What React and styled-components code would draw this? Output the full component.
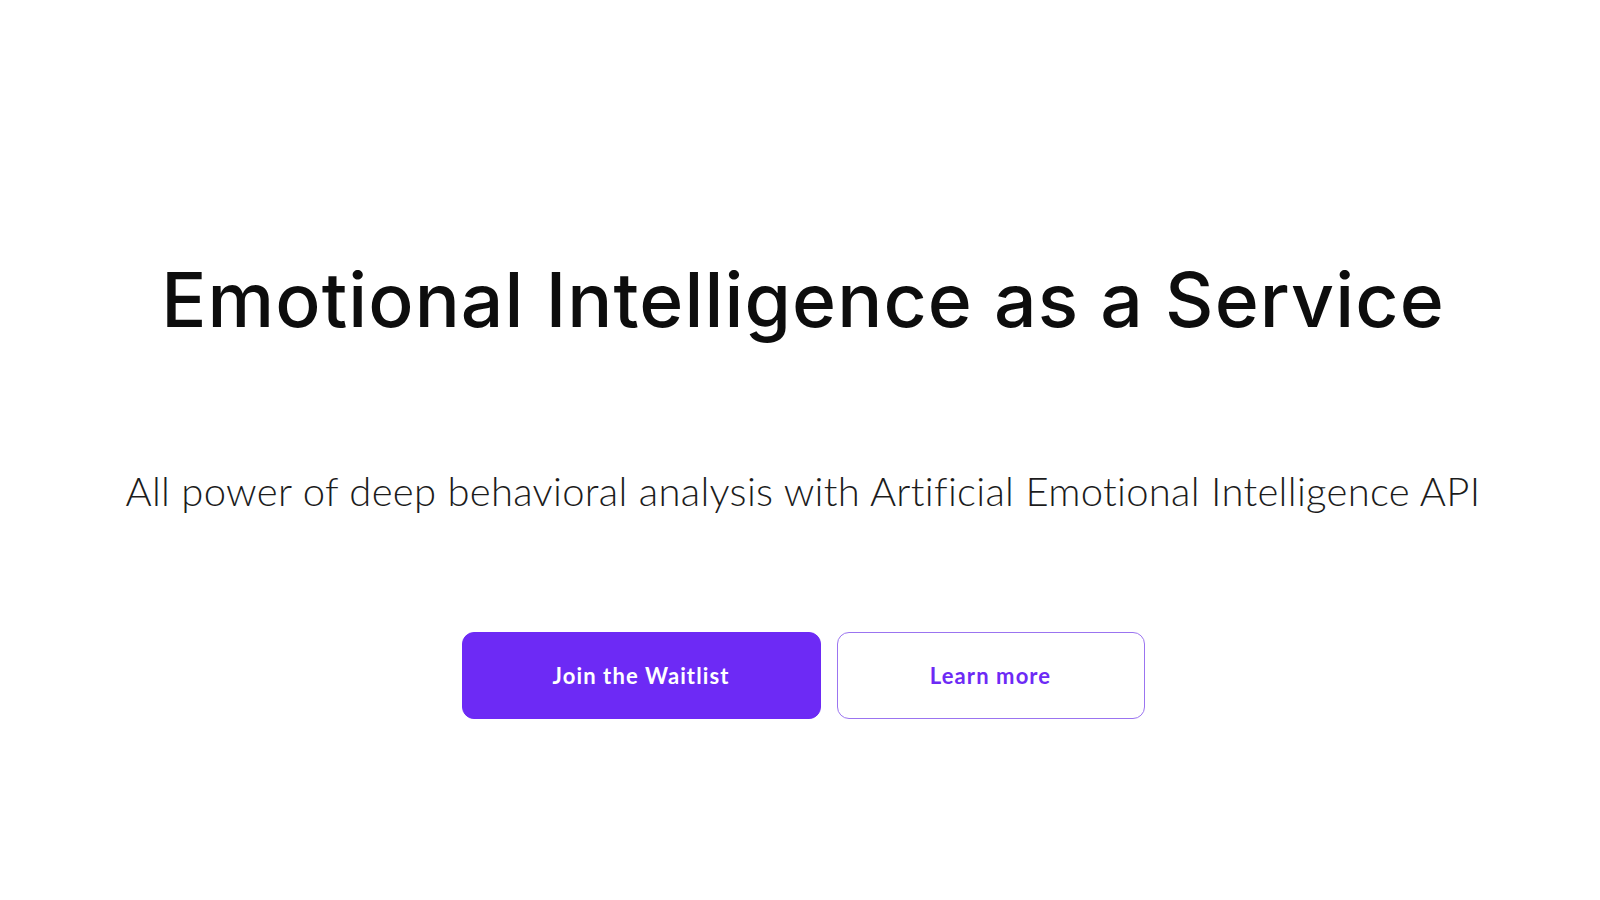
import React from 'react';
import styled, { createGlobalStyle } from 'styled-components';

const GlobalStyle = createGlobalStyle`
  html, body {
    margin: 0;
    padding: 0;
    background: #fff;
  }
  body {
    font-family: Inter, Lato, 'Noto Sans', sans-serif;
    color: #111;
  }
`;

const Hero = styled.section`
  width: 100%;
  min-height: 900px;
  padding: 262px 0 0 6px;
  box-sizing: border-box;
  display: flex;
  flex-direction: column;
  align-items: center;
  text-align: center;
`;

const Title = styled.h1`
  margin: 0;
  font-family: Inter, Lato, sans-serif;
  font-size: 75px;
  line-height: 1;
  font-weight: 500;
  letter-spacing: 1.1px;
  color: #0d0d0d;
  font-variant-ligatures: none;
`;

const Subtitle = styled.p`
  margin: 134px 0 0;
  font-family: Lato, 'Noto Sans', sans-serif;
  font-size: 40px;
  line-height: 1;
  font-weight: 300;
  letter-spacing: 0.3px;
  color: #1c1c1c;
  font-variant-ligatures: none;
`;

const Actions = styled.div`
  display: flex;
  gap: 16px;
  margin-top: 121px;
`;

const Button = styled.button`
  height: 87px;
  width: ${(p) => p.$width}px;
  border-radius: 12px;
  font-family: Lato, 'Noto Sans', sans-serif;
  font-size: 22px;
  font-weight: 700;
  letter-spacing: 1.1px;
  cursor: pointer;
  border: 1.5px solid;
  background: ${(p) => (p.$primary ? '#6d2af5' : '#fff')};
  color: ${(p) => (p.$primary ? '#fff' : '#6d2af5')};
  border-color: ${(p) => (p.$primary ? '#6d2af5' : '#9b74f0')};
`;

export default function App() {
  return (
    <>
      <GlobalStyle />
      <Hero>
        <Title>Emotional Intelligence as a Service</Title>
        <Subtitle>
          All power of deep behavioral analysis with Artificial Emotional Intelligence API
        </Subtitle>
        <Actions>
          <Button $primary $width={359}>Join the Waitlist</Button>
          <Button $width={308}>Learn more</Button>
        </Actions>
      </Hero>
    </>
  );
}
